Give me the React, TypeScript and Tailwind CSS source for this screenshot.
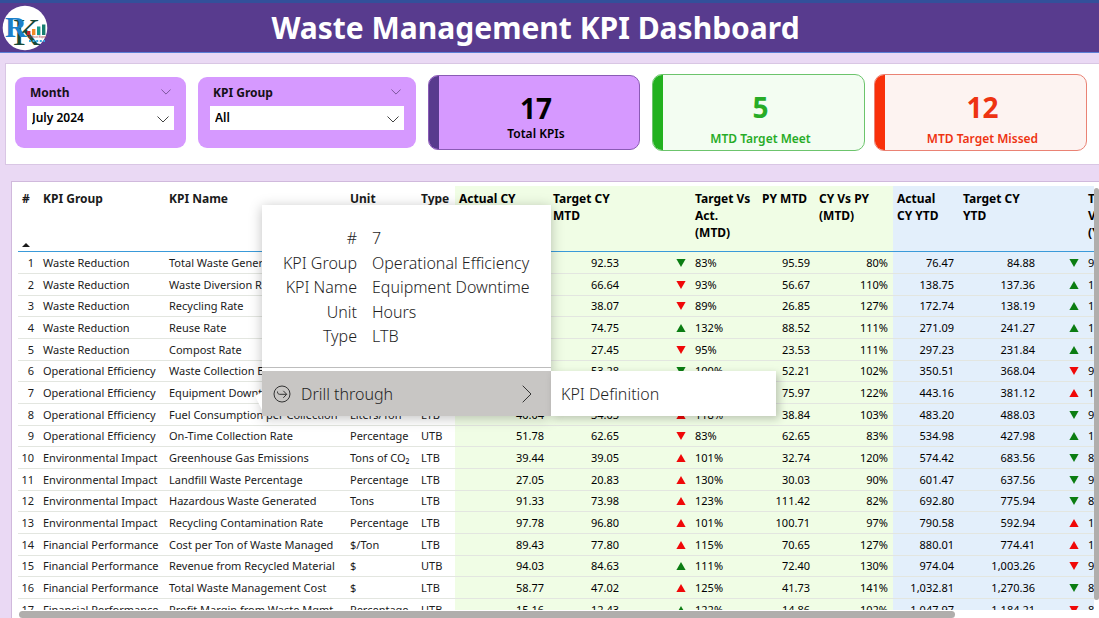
import { useState } from "react";

type Trend = "up" | "down";
type Tone = "good" | "bad";

interface Row {
  id: number;
  group: string;
  name: string;
  unit: string;
  type: "LTB" | "UTB";
  actual: string;
  target: string;
  mtdTrend: Trend;
  mtdTone: Tone;
  mtdPct: string;
  py: string;
  cyVsPy: string;
  actualYtd: string;
  targetYtd: string;
  ytdTrend: Trend;
  ytdTone: Tone;
  ytdPct: string;
}

const WR = "Waste Reduction";
const OE = "Operational Efficiency";
const EI = "Environmental Impact";
const FP = "Financial Performance";

type RowTuple = [
  string, string, string, "LTB" | "UTB", string, string, Trend, Tone, string,
  string, string, string, string, Trend, Tone, string,
];

const data: RowTuple[] = [
  [WR, "Total Waste Generated", "Tons", "LTB", "76.47", "92.53", "down", "good", "83%", "95.59", "80%", "76.47", "84.88", "down", "good", "90%"],
  [WR, "Waste Diversion Rate", "Percentage", "UTB", "62.28", "66.64", "down", "bad", "93%", "56.67", "110%", "138.75", "137.36", "up", "good", "101%"],
  [WR, "Recycling Rate", "Percentage", "UTB", "33.99", "38.07", "down", "bad", "89%", "26.85", "127%", "172.74", "138.19", "up", "good", "125%"],
  [WR, "Reuse Rate", "Percentage", "UTB", "98.35", "74.75", "up", "good", "132%", "88.52", "111%", "271.09", "241.27", "up", "good", "112%"],
  [WR, "Compost Rate", "Percentage", "UTB", "26.14", "27.45", "down", "bad", "95%", "23.53", "111%", "297.23", "231.84", "up", "good", "128%"],
  [OE, "Waste Collection Efficiency", "Percentage", "LTB", "53.28", "53.28", "down", "good", "100%", "52.21", "102%", "350.51", "368.04", "down", "bad", "95%"],
  [OE, "Equipment Downtime", "Hours", "LTB", "92.65", "79.87", "up", "bad", "116%", "75.97", "122%", "443.16", "381.12", "up", "bad", "116%"],
  [OE, "Fuel Consumption per Collection", "Liters/Ton", "LTB", "40.04", "34.03", "up", "bad", "118%", "38.84", "103%", "483.20", "488.03", "down", "good", "99%"],
  [OE, "On-Time Collection Rate", "Percentage", "UTB", "51.78", "62.65", "down", "bad", "83%", "62.65", "83%", "534.98", "427.98", "up", "good", "125%"],
  [EI, "Greenhouse Gas Emissions", "Tons of CO₂", "LTB", "39.44", "39.05", "up", "bad", "101%", "32.74", "120%", "574.42", "683.56", "down", "good", "84%"],
  [EI, "Landfill Waste Percentage", "Percentage", "LTB", "27.05", "20.83", "up", "bad", "130%", "30.03", "90%", "601.47", "637.56", "down", "good", "94%"],
  [EI, "Hazardous Waste Generated", "Tons", "LTB", "91.33", "73.98", "up", "bad", "123%", "111.42", "82%", "692.80", "775.94", "down", "good", "89%"],
  [EI, "Recycling Contamination Rate", "Percentage", "LTB", "97.78", "96.80", "up", "bad", "101%", "100.71", "97%", "790.58", "592.94", "up", "bad", "133%"],
  [FP, "Cost per Ton of Waste Managed", "$/Ton", "LTB", "89.43", "77.80", "up", "bad", "115%", "70.65", "127%", "880.01", "774.41", "up", "bad", "114%"],
  [FP, "Revenue from Recycled Material", "$", "UTB", "94.03", "84.63", "up", "good", "111%", "72.40", "130%", "974.04", "1,003.26", "down", "bad", "97%"],
  [FP, "Total Waste Management Cost", "$", "LTB", "58.77", "47.02", "up", "bad", "125%", "41.73", "141%", "1,032.81", "1,270.36", "down", "good", "81%"],
  [FP, "Profit Margin from Waste Mgmt.", "Percentage", "UTB", "15.16", "12.43", "up", "good", "122%", "14.86", "102%", "1,047.97", "1,184.21", "down", "bad", "88%"],
];

const rows: Row[] = data.map((r, i) => ({
  id: i + 1,
  group: r[0],
  name: r[1],
  unit: r[2],
  type: r[3],
  actual: r[4],
  target: r[5],
  mtdTrend: r[6],
  mtdTone: r[7],
  mtdPct: r[8],
  py: r[9],
  cyVsPy: r[10],
  actualYtd: r[11],
  targetYtd: r[12],
  ytdTrend: r[13],
  ytdTone: r[14],
  ytdPct: r[15],
}));

function Arrow({ trend, tone }: { trend: Trend; tone: Tone }) {
  return (
    <svg
      viewBox="0 0 10 8"
      className={`ml-auto block h-2 w-2.5 ${tone === "good" ? "fill-[#0b7d12]" : "fill-[#f00808]"}`}
      role="img"
      aria-label={trend}
    >
      <path d={trend === "up" ? "M5 0 9.6 8H.4z" : "M.4 0h9.2L5 8z"} />
    </svg>
  );
}

function Chevron({ className }: { className: string }) {
  return (
    <svg viewBox="0 0 12 7" className={className} fill="none" stroke="currentColor" aria-hidden="true">
      <path d="M.5.5 6 6 11.5.5" />
    </svg>
  );
}

function Logo() {
  return (
    <svg viewBox="0 0 46 46" className="h-[46px] w-[46px] shrink-0" role="img" aria-label="Company logo">
      <circle cx="23" cy="23" r="22.3" fill="#fff" />
      <g fontFamily="Liberation Serif, serif">
        <text x="11" y="40" fontSize="38" fill="#164a38">K</text>
        <text x="3" y="32" fontSize="30" fontWeight="700" fill="#1b7fc9">R</text>
      </g>
      <rect x="25" y="26" width="3.4" height="4" fill="#c0272d" />
      <rect x="30" y="24" width="3.4" height="6" fill="#f08a24" />
      <rect x="35" y="21.5" width="3.4" height="8.5" fill="#159a8c" />
      <rect x="40" y="19.5" width="3.4" height="10.5" fill="#177d6f" />
      <text x="26" y="33" fontSize="2.6" fill="#a33" fontFamily="Liberation Sans, sans-serif">An Excel Expert</text>
      <path d="M27 36h16" stroke="#35a8e0" strokeWidth="2" strokeDasharray="2 1.6" />
    </svg>
  );
}

interface SlicerProps {
  id: string;
  label: string;
  options: string[];
}

function Slicer({ id, label, options }: SlicerProps) {
  const [value, setValue] = useState(options[0]);
  return (
    <section className="h-[71px] rounded-[9px] bg-[#d699ff] px-3 pt-2">
      <div className="flex h-[21px] items-start justify-between px-[3px] text-[#151018]">
        <label htmlFor={id} className="text-xs leading-4 font-bold">{label}</label>
        <button type="button" aria-label={`Collapse ${label}`} className="pt-1 text-[#6d4a8a]">
          <Chevron className="h-1.5 w-2.5" />
        </button>
      </div>
      <div className="relative">
        <select
          id={id}
          value={value}
          onChange={(e) => setValue(e.target.value)}
          className="block h-6 w-full appearance-none bg-white pl-[5px] text-xs font-semibold text-black outline-none"
        >
          {options.map((o) => (
            <option key={o}>{o}</option>
          ))}
        </select>
        <Chevron className="pointer-events-none absolute top-2.5 right-[5px] h-[7px] w-3 text-[#444]" />
      </div>
    </section>
  );
}

interface CardProps {
  value: string;
  label: string;
  frame: string;
  bar: string;
  text: string;
}

function Card({ value, label, frame, bar, text }: CardProps) {
  return (
    <section className={`flex overflow-hidden rounded-[10px] border ${frame}`}>
      <div className={`w-2.5 shrink-0 ${bar}`} />
      <div className={`flex flex-1 flex-col items-center pt-3.5 pr-1.5 ${text}`}>
        <p className="text-[28px] leading-9 font-bold">{value}</p>
        <p className="text-xs leading-4 font-semibold">{label}</p>
      </div>
    </section>
  );
}

const columnWidths = [
  "w-[21px]", "w-[126px]", "w-[181px]", "w-[71px]", "w-[38px]", "w-[94px]", "w-[75px]", "w-[67px]", "w-[67px]",
  "w-[57px]", "w-[78px]", "w-[66px]", "w-[81px]", "w-[44px]", "w-[60px]", "w-[180px]",
];

const headings = [
  "#", "KPI Group", "KPI Name", "Unit", "Type", "Actual CY MTD", "Target CY MTD", "", "Target Vs Act. (MTD)",
  "PY MTD", "CY Vs PY (MTD)", "Actual CY YTD", "Target CY YTD", "", "Target Vs Act. (YTD)", "PY YTD",
];

function band(i: number) {
  if (i < 5) return "";
  return i < 11 ? "bg-[#f0fde5]" : "bg-[#e3effb]";
}

function KpiTable() {
  return (
    <table className="w-[1306px] table-fixed border-separate border-spacing-0 text-left text-[#1b1b1b]">
      <colgroup>
        {columnWidths.map((w, i) => (
          <col key={i} className={w} />
        ))}
      </colgroup>
      <thead>
        <tr className="h-[66px] align-top">
          {headings.map((h, i) => (
            <th
              key={i}
              scope="col"
              className={`pt-1 pl-1 text-xs leading-[17px] font-bold shadow-[inset_0_-1px_0_#3a9ad9] ${i === 0 ? "" : "pr-1.5"} ${i > 4 ? "text-black" : ""} ${band(i)}`}
            >
              {i === 0 ? (
                <button type="button" className="flex h-[57px] flex-col items-start justify-between">
                  <span>#</span>
                  <svg viewBox="0 0 8 4" className="h-1 w-2" aria-hidden="true">
                    <path d="M4 0 8 4H0z" fill="#1b1b1b" />
                  </svg>
                </button>
              ) : (
                h
              )}
            </th>
          ))}
        </tr>
      </thead>
      <tbody className="text-[11px]">
        {rows.map((r) => {
          const cells = [
            r.id, r.group, r.name, r.unit, r.type, r.actual, r.target,
            <Arrow key="m" trend={r.mtdTrend} tone={r.mtdTone} />,
            r.mtdPct, r.py, r.cyVsPy, r.actualYtd, r.targetYtd,
            <Arrow key="y" trend={r.ytdTrend} tone={r.ytdTone} />,
            r.ytdPct, "",
          ];
          return (
            <tr key={r.id} className="h-[22px] nth-[3n]:h-[21px]">
              {cells.map((c, i) => {
                const left = (i > 0 && i < 5) || i === 8 || i === 14;
                return (
                  <td
                    key={i}
                    className={`border-b border-[#e3e6e0] p-0 leading-5 whitespace-nowrap ${left ? "pl-1" : "pr-[5px] text-right"} ${i > 4 ? "text-black" : ""} ${band(i)}`}
                  >
                    {c}
                  </td>
                );
              })}
            </tr>
          );
        })}
      </tbody>
    </table>
  );
}

const details: [string, string][] = [
  ["#", "7"],
  ["KPI Group", "Operational Efficiency"],
  ["KPI Name", "Equipment Downtime"],
  ["Unit", "Hours"],
  ["Type", "LTB"],
];

function DrillMenu() {
  return (
    <div className="absolute top-[205px] left-[262px] flex items-end text-base font-light text-[#1f1f1f]">
      <svg viewBox="0 0 7 18" className="absolute bottom-1.5 -left-[7px] h-[18px] w-[7px]" aria-hidden="true">
        <path d="M7 0v18L0 4z" fill="#fff" />
      </svg>
      <div className="w-[289px] bg-white shadow-[0_2px_12px_rgba(0,0,0,0.25)]">
        <dl className="grid h-[163px] grid-cols-[95px_1fr] content-between gap-x-[15px] border-b border-[#bdbdbd] pt-[21px] pb-[19px]">
          {details.map(([k, v]) => (
            <div key={k} className="contents">
              <dt className="text-right leading-6 whitespace-nowrap">{k}</dt>
              <dd className="leading-6 whitespace-nowrap">{v}</dd>
            </div>
          ))}
        </dl>
        <button type="button" className="mt-[3px] flex h-[45px] w-full items-center bg-[#c8c6c4] pl-[11px] text-left">
          <svg viewBox="0 0 18 18" className="mr-2.5 h-[18px] w-[18px]" fill="none" stroke="#333" aria-hidden="true">
            <circle cx="9" cy="9" r="8" />
            <path d="M4.5 6.5v.6c0 1.3.9 2.2 2.2 2.2h6.8M10.3 5.8l3.4 3.5-3.4 3.5" />
          </svg>
          <span className="flex-1">Drill through</span>
          <svg viewBox="0 0 10 18" className="mr-[19px] h-[18px] w-2.5" fill="none" stroke="#333" aria-hidden="true">
            <path d="M.7.7 9 9 .7 17.3" />
          </svg>
        </button>
      </div>
      <button type="button" className="h-[45px] w-[225px] bg-white pl-2.5 text-left shadow-[3px_3px_8px_rgba(0,0,0,0.22)]">
        KPI Definition
      </button>
    </div>
  );
}

export default function App() {
  return (
    <div className="relative flex h-screen flex-col overflow-hidden bg-[#ead9f4] font-['Noto_Sans','Open_Sans',sans-serif]">
      <header className="flex h-[53px] shrink-0 items-center border-t-[3px] border-b border-t-[#33509a] border-b-[#5c7fd6] bg-[#583b8e] px-0.5">
        <Logo />
        <h1 className="flex-1 pr-[74px] text-center text-3xl font-bold text-white">Waste Management KPI Dashboard</h1>
      </header>

      <main className="flex min-h-0 flex-1 flex-col pt-2.5">
        <section className="ml-[5px] grid h-[102px] shrink-0 grid-cols-[171fr_218fr_212fr_435fr] items-center gap-3 border border-r-0 border-[#d9c6e4] bg-white pr-3 pb-[3px] pl-[9px]">
          <Slicer id="month" label="Month" options={["July 2024", "June 2024", "May 2024"]} />
          <Slicer id="group" label="KPI Group" options={["All", WR, OE, EI, FP]} />
          <Card
            value="17"
            label="Total KPIs"
            frame="h-[75px] border-[#8a5bb5] bg-[#d699ff]"
            bar="bg-[#583b8e]"
            text="text-black"
          />
          <div className="grid grid-cols-2 items-center gap-[9px]">
            <Card
              value="5"
              label="MTD Target Meet"
              frame="h-[77px] border-[#6cc46c] bg-[#f3fdf2]"
              bar="bg-[#22b11f]"
              text="gap-1.5 text-[#27ac27]"
            />
            <Card
              value="12"
              label="MTD Target Missed"
              frame="h-[77px] border-[#ea8274] bg-[#fdf3f1]"
              bar="bg-[#f9300a]"
              text="gap-1.5 text-[#ee3312]"
            />
          </div>
        </section>

        <section className="relative mt-4 ml-[11px] min-h-0 flex-1 overflow-hidden border-t border-l border-[#d0b9dc] bg-white pt-1 pr-[5px] pb-2 pl-1.5">
          <div className="h-full overflow-hidden">
            <KpiTable />
          </div>
          <div className="absolute top-1.5 right-0 bottom-[18px] w-[5px] rounded-full bg-[#b0aeac]" />
          <div className="absolute right-[144px] bottom-0 left-[7px] h-[7px] rounded-full bg-[#b0aeac]" />
        </section>
      </main>

      <DrillMenu />
    </div>
  );
}
